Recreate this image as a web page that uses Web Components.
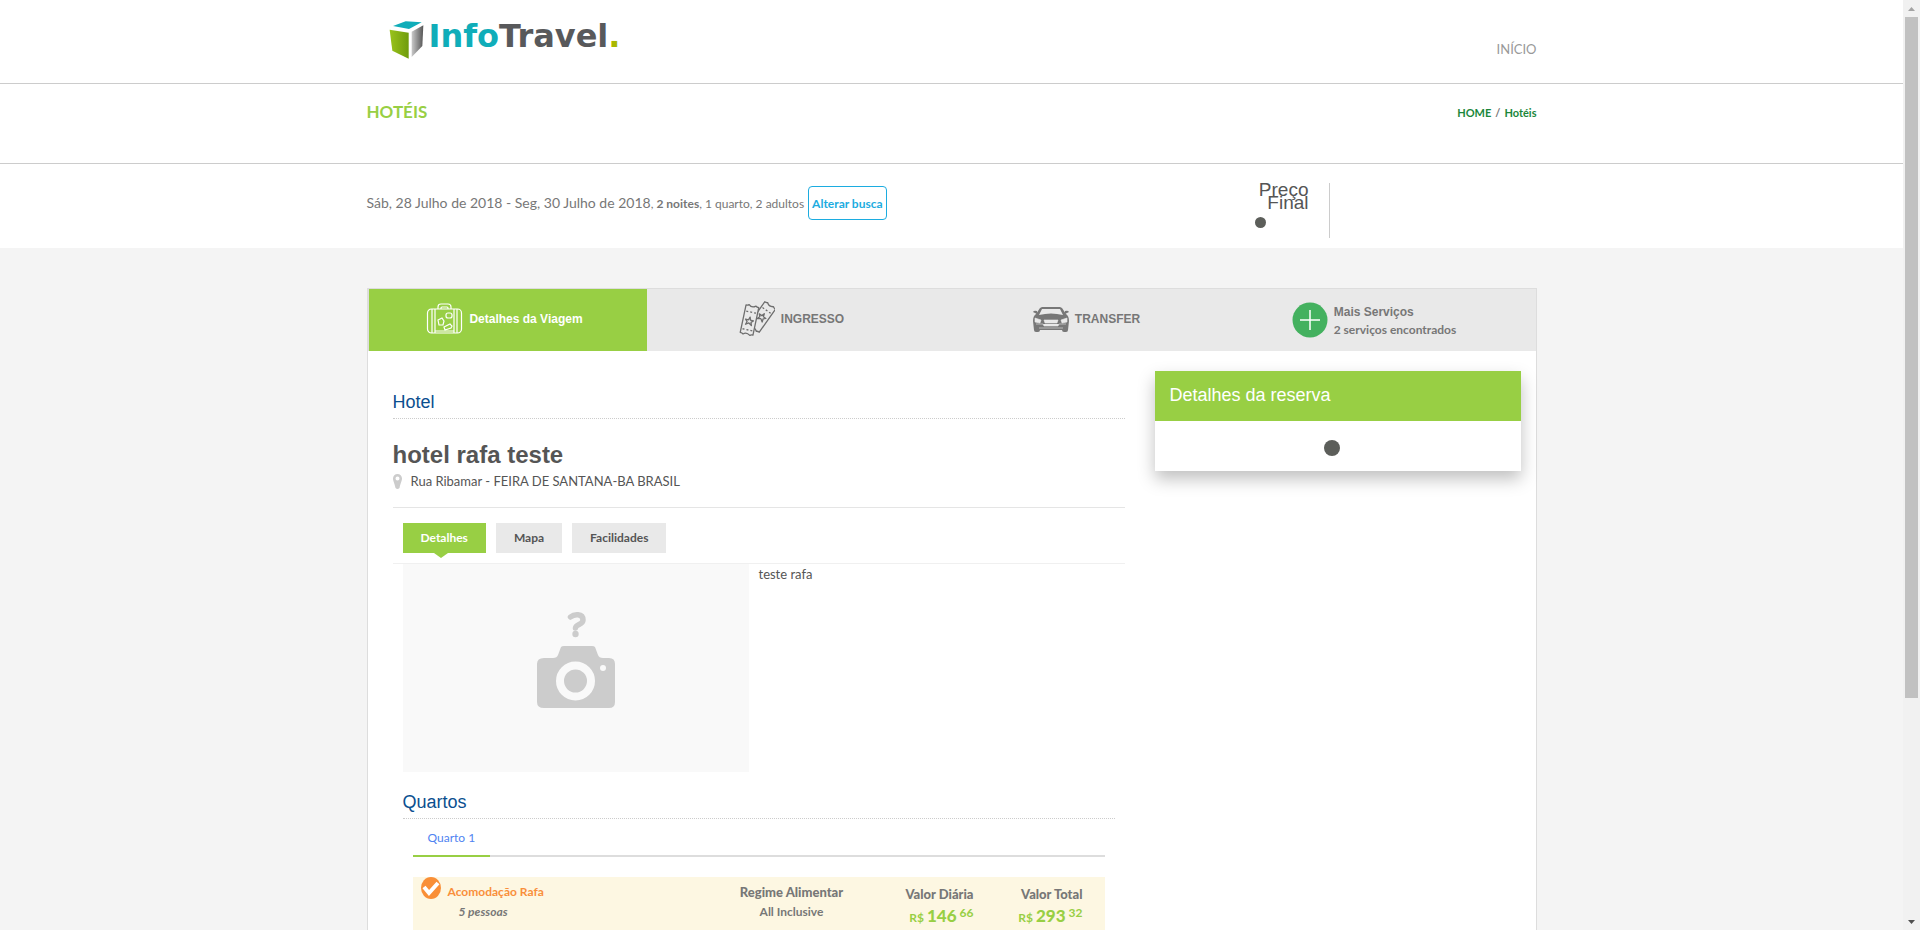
<!DOCTYPE html>
<html lang="pt-BR">
<head>
<meta charset="utf-8">
<title>InfoTravel - Hotéis</title>
<style>
body { margin: 0; font-family: Lato, "Liberation Sans", sans-serif; font-size: 12px; color: #777; background: #f4f4f4; }
</style>
</head>
<body>
<app-shell>
  <site-header></site-header>
  <title-bar></title-bar>
  <search-bar></search-bar>
  <trip-panel>
    <service-tabs slot="tabs"></service-tabs>
    <hotel-details></hotel-details>
    <booking-summary slot="aside"></booking-summary>
  </trip-panel>
</app-shell>

<script>
const BASE = `*{box-sizing:border-box}h1,h2,p{margin:0;font-weight:400}a{color:inherit;text-decoration:none}button{font:inherit;border:0;padding:0;background:none;color:inherit;cursor:pointer}svg{display:block;flex:none}
.wrap{max-width:1170px;margin:0 auto;display:flex;justify-content:space-between}`;
function define(name, css, html) {
  const t = document.createElement('template');
  t.innerHTML = `<style>${BASE}${css}</style>${html}`;
  customElements.define(name, class extends HTMLElement {
    constructor() {
      super();
      this.attachShadow({ mode: 'open' }).appendChild(t.content.cloneNode(true));
    }
  });
}

define('scroll-track', `
:host{display:flex;flex-direction:column;width:17px;background:#f1f1f1}
svg{width:17px;height:17px}
.track{flex:1;padding:0 2px}
.thumb{height:76%;background:#c1c1c1}`,
`<svg viewBox="0 0 17 17"><path d="M5 11h7L8.500 7z" fill="#a3a3a3"/></svg>
<div class="track"><div class="thumb"></div></div>
<svg viewBox="0 0 17 17"><path d="M5 7h7L8.500 11z" fill="#505050"/></svg>`);

define('app-shell', `
:host{display:flex;height:100vh;overflow:hidden}
main{flex:1;min-width:0;overflow:hidden}`,
`<main><slot></slot></main><scroll-track></scroll-track>`);

define('site-header', `
:host{display:block;background:#fff;border-bottom:1px solid #ccc}
.wrap{height:83px}
.logo{display:flex;gap:5px;padding:20px 0 0 22px}
.logo svg{width:35px;height:40px}
.word{font:700 32px/32px "DejaVu Sans",sans-serif;color:#58595b}
.info{color:#10adb9}.dot{color:#a9b800}
nav{padding-top:41px;font-size:13px;line-height:16px;color:#999}`,
`<div class="wrap">
<a class="logo" href="#"><svg viewBox="86 62 105 120">
<defs><linearGradient id="g"><stop offset="0" stop-color="#9ac31c"/><stop offset="1" stop-color="#6f9c0c"/></linearGradient>
<linearGradient id="s"><stop offset="0" stop-color="#c9c9c9"/><stop offset="1" stop-color="#555"/></linearGradient></defs>
<path d="M98 80l38-14 48 3-38 20z" fill="#10adb9"/><path d="M88 91l57 9v78l-49-24z" fill="url(#g)"/><path d="M154 97l35-19-3 62-32 33z" fill="url(#s)"/></svg>
<span class="word"><span class="info">Info</span>Travel<span class="dot">.</span></span></a>
<nav><a href="#">INÍCIO</a></nav></div>`);

define('title-bar', `
:host{display:block;background:#fff;border-bottom:1px solid #ccc}
.wrap{height:79px}
h1{padding-top:16px;font-size:17px;line-height:24px;font-weight:700;color:#98cf44}
nav{padding-top:21px;font-size:11px;line-height:16px;font-weight:700;display:flex;gap:4px}
a{color:#1b873b}`,
`<div class="wrap"><h1>HOTÉIS</h1><nav><a href="#">HOME</a><span>/</span><a href="#">Hotéis</a></nav></div>`);

define('search-bar', `
:host{display:block;background:#fff}
.wrap{height:84px}
.query{display:flex;align-items:center;gap:4px;height:34px;margin-top:22px}
.query p{padding-bottom:2px}
.date{font-size:14px}
button{height:34px;padding:0 3px;border:1px solid #1cace0;border-radius:4px;color:#1cace0;font-size:12px;font-weight:700;background:#fff}
.price{width:75px;height:55px;margin:19px 207px 0 0;padding-right:20px;border-right:1px solid #ccc;color:#555;text-align:right;font:19px/13px "Liberation Sans",sans-serif}
i{display:block;width:11px;height:11px;border-radius:50%;background:#5c5e5a;margin-top:8px}`,
`<div class="wrap"><div class="query"><p><span class="date">Sáb, 28 Julho de 2018 - Seg, 30 Julho de 2018</span>, <b>2 noites</b>, 1 quarto, 2 adultos</p><button>Alterar busca</button></div>
<div class="price"><p>Preço Final</p><i></i></div></div>`);

define('trip-panel', `
:host{display:block;padding-top:40px}
section{max-width:1170px;min-height:760px;margin:0 auto;background:#fff;border:1px solid #ddd}
.cols{display:grid;grid-template-columns:minmax(0,1fr) 366px;gap:30px;padding:20px 15px 0 25px;align-items:start}`,
`<section><slot name="tabs"></slot><div class="cols"><slot></slot><slot name="aside"></slot></div></section>`);

define('service-tabs', `
:host{display:grid;grid-template-columns:279fr 290fr 300fr 275fr;padding-right:24px;background:#e9e9e9;font:700 12px/18px "Liberation Sans",sans-serif;color:#777}
button{height:62px;display:flex;align-items:center;justify-content:center;gap:6px;text-align:left;padding-bottom:2px}
.on{background:#98cf44;color:#fff;border-left:1px solid #ddd;padding-right:6px}
button:last-child{padding-bottom:0}
span{padding-top:2px}
small{display:block;font:700 12px/18px Lato,sans-serif}`,
`<button class="on"><svg width="37" height="34" viewBox="0 0 37 34" fill="none" stroke="#fff" stroke-width="1.200"><rect x="1.500" y="7" width="34" height="24" rx="4"/><path d="M6 7v24M9 7v24M28 7v24M31 7v24M12 7V5q0-3 3-3h7q3 0 3 3v2M15 7V6q0-1 1-1h5q1 0 1 1v1M9 29h19"/><rect x="20" y="11" width="6" height="5" rx="2"/><path d="M12 18l4-2 2 3-1 4-4 0zM18 25l6-3 2 2-1 2-6 2z"/></svg>Detalhes da Viagem</button>
<button><svg width="36" height="36" viewBox="0 0 36 36" fill="#e9e9e9" stroke="#6e6e6e" stroke-width="1.300" stroke-linejoin="round">
<g transform="translate(23 16) rotate(35)"><path d="M-6.500-14q2 0 3-1 3 3 7 0 1 1 3 1v28q-2 0-3 1-4-3-7 0-1-1-3-1z"/><path d="M-5-8h2m2 0h2m2 0h2M0-4l1 3h3l-2 2 1 3-3-2-3 2 1-3-2-2h3z"/></g>
<g transform="translate(10.500 19) rotate(12)"><path d="M-6.500-14q2 0 3-1 3 3 7 0 1 1 3 1v28q-2 0-3 1-4-3-7 0-1-1-3-1z"/><path d="M-5-8h2m2 0h2m2 0h2M-5 10h2m2 0h2m2 0h2M0-3l1 3h3l-2 2 1 3-3-2-3 2 1-3-2-2h3z"/></g></svg>INGRESSO</button>
<button><svg width="36" height="26" viewBox="0 0 36 26"><path d="M9 1h18l2 1 4 6q3 2 3 7l-1 9q0 2-2 2h-2q-2 0-2-2H7q0 2-2 2H3q-2 0-2-2L0 15q0-5 3-7l4-6z" fill="#777"/><path d="M9 3h18l3 6q-12-3-24 0z" fill="#e9e9e9"/><path d="M0 6q1-2 4-1v3zM36 6q-1-2-4-1v3z" fill="#777"/><path d="M2 12l6 2-1 3-5-1zM34 12l-6 2 1 3 5-1zM11 14h14l-1 3H12zM3 18h7l1 2h14l1-2h7M6 22h24" fill="#e9e9e9" stroke="#e9e9e9" stroke-width=".6"/></svg>TRANSFER</button>
<button><svg width="36" height="36" viewBox="0 0 36 36"><circle cx="18" cy="18" r="17.500" fill="#44b15f"/><path d="M18 8v20M8 18h20" stroke="#fff" stroke-width="1.500"/></svg><span>Mais Serviços<small>2 serviços encontrados</small></span></button>`);

define('hotel-details', `
:host{display:block;padding-top:21px;color:#555}
h2{font:18px/20px "Liberation Sans",sans-serif;color:#0b4f8f;padding-bottom:6px;border-bottom:1px dotted #ccc}
h1{font:700 24px/28px "Liberation Sans",sans-serif;margin-top:22px}
.addr{display:flex;gap:9px;font-size:13px;line-height:20px;margin-top:2px;padding-bottom:16px;border-bottom:1px solid #e5e5e5}
.addr svg{margin:3px 0 0 0}
.tabs{display:flex;gap:10px;padding:15px 10px 10px;border-bottom:1px solid #f0f0f0}
.tabs button{position:relative;height:30px;padding:0 18px 2px;background:#e9e9e9;font-size:12px;font-weight:700}
.tabs .on{background:#98cf44;color:#fff}
.on::after{content:"";position:absolute;left:31px;top:30px;border:7px solid transparent;border-top:5px solid #98cf44;border-bottom:0}
.about{display:flex;gap:10px;padding-left:10px;font-size:13px;line-height:20px}
.photo{width:346px;height:208px;background:#f9f9f9}
.rooms{padding:20px 10px 0}`,
`<h2>Hotel</h2><h1>hotel rafa teste</h1>
<p class="addr"><svg width="9" height="15" viewBox="0 0 9 15"><path fill-rule="evenodd" d="M4.500 0C7 0 9 2 9 4.500 9 7 7.500 9 6.500 14q-2 2-4 0C1.500 9 0 7 0 4.500 0 2 2 0 4.500 0zm0 2.500a2 2 0 1 0 0 4 2 2 0 0 0 0-4z" fill="#ccc"/></svg>Rua Ribamar - FEIRA DE SANTANA-BA BRASIL</p>
<div class="tabs"><button class="on">Detalhes</button><button>Mapa</button><button>Facilidades</button></div>
<div class="about"><svg class="photo" viewBox="0 0 346 208" role="img" aria-label="Sem foto"><path d="M167.500 53C171 50 180 49 180 56 180 61 173 60 172.500 64" fill="none" stroke="#ccc" stroke-width="5.500" stroke-linecap="round"/><circle cx="172.500" cy="70" r="3.200" fill="#ccc"/>
<path d="M141 94h9q4 0 5-3l3-8q1-1 3-1h28q2 0 3 1l3 8q1 3 5 3h6q6 0 6 6v38q0 6-6 6h-65q-7 0-7-6v-38q0-6 7-6z" fill="#ccc"/><circle cx="172.500" cy="117" r="15.500" fill="none" stroke="#f9f9f9" stroke-width="8"/><circle cx="200" cy="104" r="3" fill="#f9f9f9"/></svg><p>teste rafa</p></div>
<div class="rooms"><h2>Quartos</h2><room-list></room-list></div>`);

define('room-list', `
:host{display:block;padding:0 10px;color:#777}
nav{display:flex;border-bottom:2px solid #ddd}
nav a{padding:11px 15px 9px;line-height:16px;color:#4f83f1;margin-bottom:-2px;border-bottom:2px solid #98cf44}
table{width:100%;margin-top:20px;border-spacing:0;background:#fdf7e2;font-weight:700;line-height:20px;table-layout:fixed}
th{font-size:13px}
td{vertical-align:top;padding:5px 0 16px}
td.name{padding:0}
.room{display:flex;gap:7px;padding:0 8px 16px;color:#f98f3b}
.room p{padding-top:5px}
em{display:block;color:#777;padding-left:11px}
strong{display:block;font-size:13px}
.meal{text-align:center;width:144px}
.cost{text-align:right;width:110px;padding-top:7px}
.cost:last-child{padding-right:22px;width:131px}
p{font-weight:700}
.price{display:flex;justify-content:flex-end;align-items:baseline;gap:3px;line-height:24px;color:#98cf44}
.price b{font-size:17px}.price span{align-self:flex-start;line-height:18px}`,
`<nav><a href="#">Quarto 1</a></nav>
<table><tr><td class="name"><div class="room"><svg width="20" height="22" viewBox="0 0 20 22"><ellipse cx="10" cy="11" rx="10" ry="11" fill="#f98f37"/><path d="M3 10l5 6L17 6" fill="none" stroke="#fff" stroke-width="4"/></svg><p>Acomodação Rafa<em>5 pessoas</em></p></div></td>
<td class="meal"><strong>Regime Alimentar</strong>All Inclusive</td>
<td class="cost"><strong>Valor Diária</strong><p class="price">R$ <b>146</b><span>66</span></p></td>
<td class="cost"><strong>Valor Total</strong><p class="price">R$ <b>293</b><span>32</span></p></td></tr></table>`);

define('booking-summary', `
:host{display:block;background:#fff;box-shadow:0 8px 16px rgba(0,0,0,.25)}
h2{padding:14px 15px 16px;font:18px/20px "Liberation Sans",sans-serif;color:#fff;background:#98cf44}
div{height:50px;display:flex;align-items:center;justify-content:center;padding:4px 12px 0 0}
i{width:16px;height:16px;border-radius:50%;background:#5c5e5a}`,
`<h2>Detalhes da reserva</h2><div><i></i></div>`);
</script>
</body>
</html>
